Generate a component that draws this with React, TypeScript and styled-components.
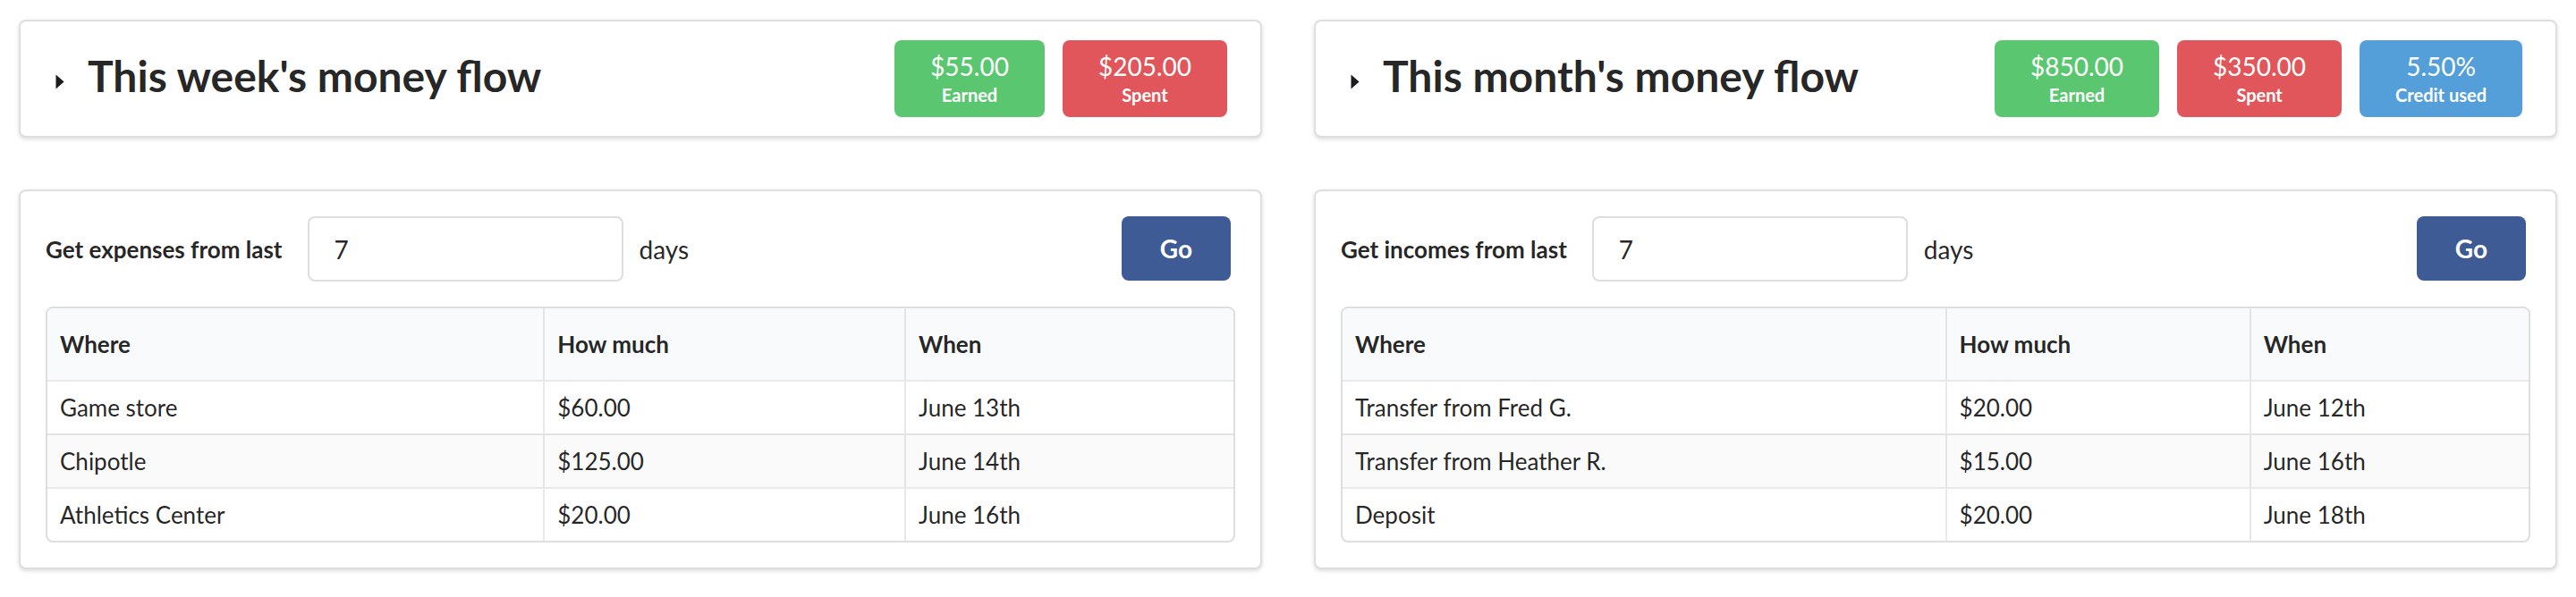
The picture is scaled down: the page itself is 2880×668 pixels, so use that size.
import React from "react";
import styled, { createGlobalStyle } from "styled-components";

const Global = createGlobalStyle`
  html, body { margin: 0; padding: 0; background: #ffffff; }
  body {
    font-family: Lato, "Helvetica Neue", Arial, sans-serif;
    color: rgba(0, 0, 0, 0.87);
  }
  * { box-sizing: border-box; }
`;

const Page = styled.div`
  display: flex;
  gap: 58px;
  padding: 22px 21px;
`;

const Column = styled.div`
  flex: 1 1 0;
  min-width: 0;
  display: flex;
  flex-direction: column;
  gap: 58px;
`;

const Segment = styled.div`
  background: #ffffff;
  border: 2px solid rgba(34, 36, 38, 0.15);
  border-radius: 8px;
  box-shadow: 0 2px 4px 0 rgba(34, 36, 38, 0.15);
`;

const HeaderSegment = styled(Segment)`
  display: flex;
  align-items: center;
  justify-content: space-between;
  padding: 21px 37px 21px 39px;
`;

const TitleRow = styled.div`
  display: flex;
  align-items: center;
  gap: 26px;
`;

const Caret = styled.svg`
  width: 10px;
  height: 17px;
  margin-top: 7px;
  flex: none;
`;

const Title = styled.h2`
  margin: 0;
  padding-bottom: 6px;
  font-size: 48px;
  line-height: 48px;
  font-weight: 700;
  color: rgba(0, 0, 0, 0.87);
`;

const Stats = styled.div`
  display: flex;
  gap: 20px;
`;

const Stat = styled.div<{ $color: string }>`
  background: ${(p) => p.$color};
  color: #ffffff;
  border-radius: 8px;
  padding: 12px 40px 10px;
  text-align: center;
  white-space: nowrap;
`;

const StatValue = styled.div`
  font-size: 28px;
  line-height: 34px;
  font-weight: 400;
`;

const StatLabel = styled.div`
  font-size: 20px;
  line-height: 30px;
  font-weight: 700;
`;

const BodySegment = styled(Segment)`
  display: flex;
  flex-direction: column;
  gap: 28px;
  padding: 28px;
`;

const FilterRow = styled.div`
  display: flex;
  align-items: center;
`;

const FieldLabel = styled.label`
  font-size: 26px;
  font-weight: 700;
  margin-right: 28px;
  white-space: nowrap;
`;

const DaysInput = styled.input`
  width: 353px;
  height: 73px;
  padding: 0 28px;
  border: 2px solid rgba(34, 36, 38, 0.15);
  border-radius: 8px;
  font-family: Lato, "Helvetica Neue", Arial, sans-serif;
  font-size: 28px;
  color: rgba(0, 0, 0, 0.87);
  background: #ffffff;
  outline: none;
`;

const Unit = styled.span`
  font-size: 28px;
  margin-left: 18px;
`;

const GoButton = styled.button`
  align-self: flex-start;
  margin-left: auto;
  margin-right: 5px;
  padding: 22px 43px;
  border: none;
  border-radius: 8px;
  background: #3e5b96;
  color: #ffffff;
  font-family: Lato, "Helvetica Neue", Arial, sans-serif;
  font-size: 28px;
  line-height: 28px;
  font-weight: 700;
  cursor: pointer;
`;

const Table = styled.table`
  width: 100%;
  table-layout: fixed;
  border-collapse: separate;
  border-spacing: 0;
  border: 2px solid rgba(34, 36, 38, 0.15);
  border-radius: 8px;
  font-size: 26px;
  color: rgba(0, 0, 0, 0.87);
`;

const Col = styled.col<{ $width: string }>`
  width: ${(p) => p.$width};
`;

const Th = styled.th`
  background: #f9fafb;
  text-align: left;
  font-weight: 700;
  padding: 20px 14px;
  line-height: 40px;
  &:first-child { border-top-left-radius: 6px; }
  &:last-child { border-top-right-radius: 6px; }
  & + & { border-left: 2px solid rgba(34, 36, 38, 0.1); }
`;

const Row = styled.tr`
  &:nth-child(2n) td { background: rgba(0, 0, 50, 0.02); }
`;

const Td = styled.td`
  padding: 9px 14px;
  line-height: 40px;
  border-top: 2px solid rgba(34, 36, 38, 0.1);
  white-space: nowrap;
  & + & { border-left: 2px solid rgba(34, 36, 38, 0.1); }
`;

type StatItem = { value: string; label: string; color: string };
type Entry = { where: string; amount: string; when: string };

const GREEN = "#5ac770";
const RED = "#e1565a";
const BLUE = "#549fd9";

const CaretIcon = () => (
  <Caret viewBox="0 0 10 17" aria-hidden>
    <path d="M0.5 0.6 L9.6 8.5 L0.5 16.4 Z" fill="#1b1c1d" />
  </Caret>
);

const FlowHeader = ({ title, stats }: { title: string; stats: StatItem[] }) => (
  <HeaderSegment>
    <TitleRow>
      <CaretIcon />
      <Title>{title}</Title>
    </TitleRow>
    <Stats>
      {stats.map((s) => (
        <Stat key={s.label} $color={s.color}>
          <StatValue>{s.value}</StatValue>
          <StatLabel>{s.label}</StatLabel>
        </Stat>
      ))}
    </Stats>
  </HeaderSegment>
);

const FlowTable = ({
  label,
  widths,
  rows,
}: {
  label: string;
  widths: string[];
  rows: Entry[];
}) => (
  <BodySegment>
    <FilterRow>
      <FieldLabel>{label}</FieldLabel>
      <DaysInput defaultValue="7" />
      <Unit>days</Unit>
      <GoButton>Go</GoButton>
    </FilterRow>
    <Table>
      <colgroup>
        {widths.map((w, i) => (
          <Col key={i} $width={w} />
        ))}
      </colgroup>
      <thead>
        <tr>
          <Th>Where</Th>
          <Th>How much</Th>
          <Th>When</Th>
        </tr>
      </thead>
      <tbody>
        {rows.map((r) => (
          <Row key={r.where}>
            <Td>{r.where}</Td>
            <Td>{r.amount}</Td>
            <Td>{r.when}</Td>
          </Row>
        ))}
      </tbody>
    </Table>
  </BodySegment>
);

export default function App() {
  return (
    <>
      <Global />
      <Page>
        <Column>
          <FlowHeader
            title="This week's money flow"
            stats={[
              { value: "$55.00", label: "Earned", color: GREEN },
              { value: "$205.00", label: "Spent", color: RED },
            ]}
          />
          <FlowTable
            label="Get expenses from last"
            widths={["41.8%", "30.45%", "27.75%"]}
            rows={[
              { where: "Game store", amount: "$60.00", when: "June 13th" },
              { where: "Chipotle", amount: "$125.00", when: "June 14th" },
              { where: "Athletics Center", amount: "$20.00", when: "June 16th" },
            ]}
          />
        </Column>
        <Column>
          <FlowHeader
            title="This month's money flow"
            stats={[
              { value: "$850.00", label: "Earned", color: GREEN },
              { value: "$350.00", label: "Spent", color: RED },
              { value: "5.50%", label: "Credit used", color: BLUE },
            ]}
          />
          <FlowTable
            label="Get incomes from last"
            widths={["50.8%", "25.65%", "23.55%"]}
            rows={[
              { where: "Transfer from Fred G.", amount: "$20.00", when: "June 12th" },
              { where: "Transfer from Heather R.", amount: "$15.00", when: "June 16th" },
              { where: "Deposit", amount: "$20.00", when: "June 18th" },
            ]}
          />
        </Column>
      </Page>
    </>
  );
}
